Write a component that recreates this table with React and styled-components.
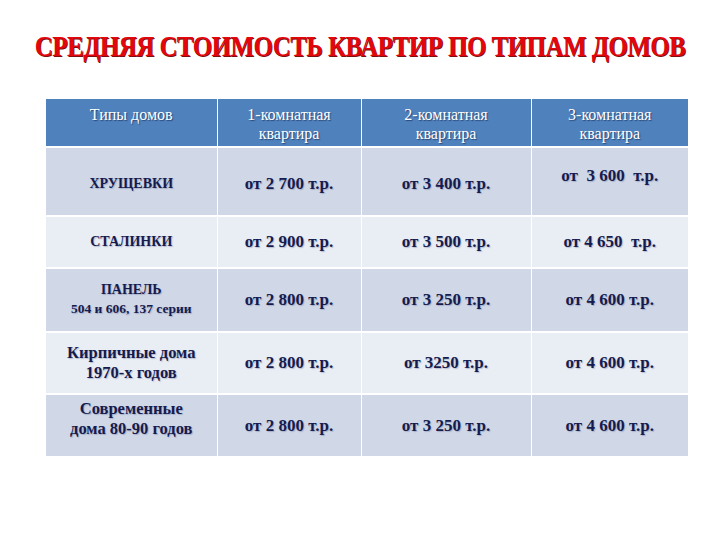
import styled, { createGlobalStyle } from "styled-components";

const GlobalStyle = createGlobalStyle`
  html, body {
    margin: 0;
    padding: 0;
    background: #ffffff;
  }
  body {
    width: 720px;
    height: 540px;
    overflow: hidden;
    font-family: "Liberation Serif", "DejaVu Serif", serif;
  }
`;

const Slide = styled.main`
  width: 720px;
  height: 540px;
  box-sizing: border-box;
  padding: 30px 0 0 46px;
  display: flex;
  flex-direction: column;
  align-items: flex-start;
`;

const Title = styled.h1`
  margin: 0 0 37px -11px;
  width: 650px;
  height: 32px;
  display: flex;
  justify-content: center;
  align-items: center;
  font-family: "Liberation Serif", "Times New Roman", serif;
  font-size: 29px;
  font-weight: 700;
  letter-spacing: -0.6px;
  color: #e3060c;
  text-shadow: 1px 1px 0 #7a1010;
  white-space: nowrap;
  transform: scaleX(0.86);
  transform-origin: center;
`;

const Table = styled.table`
  width: 642px;
  border-collapse: collapse;
  table-layout: fixed;
`;

const HeadCell = styled.th`
  height: 48px;
  box-sizing: border-box;
  padding: 6px 4px 0;
  vertical-align: top;
  background: #4f81bd;
  border-right: 1px solid #ffffff;
  border-bottom: 2px solid #ffffff;
  color: #ffffff;
  font-size: 16px;
  font-weight: 400;
  line-height: 19px;
  text-shadow: 1px 1px 1px #2a4a78;
  text-align: center;

  &:last-child {
    border-right: none;
  }
`;

const Row = styled.tr`
  height: ${(p) => p.$h}px;
  background: ${(p) => (p.$odd ? "#d0d8e8" : "#e9edf4")};
`;

const Cell = styled.td`
  box-sizing: border-box;
  padding: ${(p) => p.$pad || "0 4px"};
  border-right: 1px solid #ffffff;
  border-bottom: 2px solid #ffffff;
  text-align: center;
  vertical-align: middle;
  white-space: pre;
  color: #151b4e;
  font-size: ${(p) => p.$size || 17}px;
  font-weight: 700;
  line-height: 20px;
  text-shadow: 1px 1px 1px rgba(90, 100, 140, 0.35);

  &:last-child {
    border-right: none;
  }
`;

const SubLine = styled.span`
  display: block;
  font-size: 13.5px;
  line-height: 17px;
`;

const rows = [
  { h: 69, odd: true, name: "ХРУЩЕВКИ", size: 14, namePad: "4px 4px 0", prices: ["от 2 700 т.р.", "от 3 400 т.р.", "от  3 600  т.р."], lastPad: "0 4px 12px", pricePad: "4px 4px 0" },
  { h: 52, odd: false, name: "СТАЛИНКИ", size: 14, prices: ["от 2 900 т.р.", "от 3 500 т.р.", "от 4 650  т.р."] },
  { h: 64, odd: true, name: "ПАНЕЛЬ", sub: "504 и 606, 137 серии", size: 14, namePad: "0 4px 4px", prices: ["от 2 800 т.р.", "от 3 250 т.р.", "от 4 600 т.р."] },
  { h: 62, odd: false, name: "Кирпичные дома\n1970-х годов", size: 16.5, prices: ["от 2 800 т.р.", "от 3250 т.р.", "от 4 600 т.р."] },
  { h: 63, odd: true, name: "Современные\nдома 80-90 годов", size: 16.5, namePad: "0 4px 14px", prices: ["от 2 800 т.р.", "от 3 250 т.р.", "от 4 600 т.р."] },
];

export default function App() {
  return (
    <Slide>
      <GlobalStyle />
      <Title>СРЕДНЯЯ СТОИМОСТЬ КВАРТИР ПО ТИПАМ ДОМОВ</Title>
      <Table>
        <colgroup>
          <col style={{ width: 171 }} />
          <col style={{ width: 144 }} />
          <col style={{ width: 170 }} />
          <col style={{ width: 157 }} />
        </colgroup>
        <thead>
          <tr>
            <HeadCell>Типы домов</HeadCell>
            <HeadCell>1-комнатная<br />квартира</HeadCell>
            <HeadCell>2-комнатная<br />квартира</HeadCell>
            <HeadCell>3-комнатная<br />квартира</HeadCell>
          </tr>
        </thead>
        <tbody>
          {rows.map((r) => (
            <Row key={r.name} $h={r.h} $odd={r.odd}>
              <Cell $size={r.size} $pad={r.namePad}>
                {r.name}
                {r.sub && <SubLine>{r.sub}</SubLine>}
              </Cell>
              {r.prices.map((p, i) => (
                <Cell key={i} $pad={i === 2 ? r.lastPad || r.pricePad : r.pricePad}>
                  {p}
                </Cell>
              ))}
            </Row>
          ))}
        </tbody>
      </Table>
    </Slide>
  );
}
